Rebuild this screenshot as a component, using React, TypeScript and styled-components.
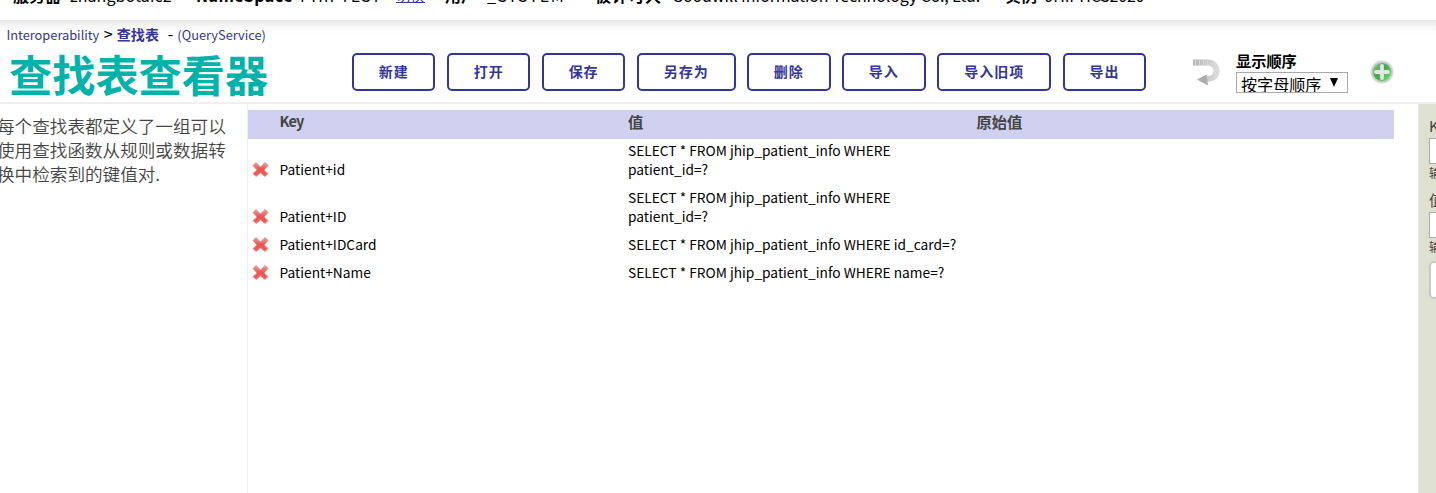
import React from "react";
import styled, { createGlobalStyle } from "styled-components";

const Global = createGlobalStyle`
  * { box-sizing: border-box; }
  body { margin: 0; background: #fff; color: #000; overflow: hidden; font-family: "Noto Sans CJK SC", sans-serif; }
`;
const Page = styled.div`width: 1436px; height: 493px; overflow: hidden; display: flex; flex-direction: column;`;
const TopBar = styled.div`height: 20px; flex: none; overflow: hidden; display: flex; align-items: flex-start; padding-left: 13px;`;
const Info = styled.div<{ $w: number }>`
  width: ${p => p.$w}px; flex: none; display: flex; white-space: nowrap; margin-top: -17px;
  font-size: 16px; line-height: 24px;
`;
const InfoLabel = styled.b<{ $w: number; $ls?: number }>`width: ${p => p.$w}px; flex: none; letter-spacing: ${p => p.$ls ?? 0}px;`;
const InfoValue = styled.span<{ $ls?: number }>`letter-spacing: ${p => p.$ls ?? 0}px;`;
const Switch = styled.a`color: #333695; text-decoration: underline; font-size: 14.5px; margin-left: 14px;`;
const Header = styled.header`
  height: 84px; flex: none; border-bottom: 2px solid #f0f0f0;
  background: linear-gradient(#e6e6e6, #f6f6f6 6px, #fff 15px);
`;
const Crumbs = styled.div`
  height: 30px; padding: 3px 0 0 6.5px; display: flex; align-items: baseline; white-space: pre;
  font-size: 12.8px; line-height: 20px; color: #333695;
`;
const Current = styled.b`font-size: 14px; letter-spacing: 0.2px;`;
const Sep = styled.span<{ $m: string }>`color: #000; font-size: 16px; margin: ${p => p.$m};`;
const Tools = styled.div`display: flex; height: 46px; align-items: flex-start;`;
const Title = styled.h1`
  margin: 0; padding-left: 9px; width: 352px; flex: none; font-size: 43.2px; line-height: 46px; font-weight: 700; color: #00b2a9;
`;
const Buttons = styled.div`display: flex; gap: 11.67px; margin-top: 3px; width: 840px; flex: none;`;
const Button = styled.button<{ $w: number }>`
  width: ${p => p.$w}px; height: 38px; flex: none; padding: 0 0 2px; border: 2px solid #333695; border-radius: 5px; background: #fff;
  color: #333695; font: 700 14px "Noto Sans CJK SC", sans-serif; letter-spacing: 1px; white-space: nowrap;
`;
const Undo = styled.svg`width: 28px; height: 30px; flex: none; margin-top: 7px;`;
const Order = styled.div`width: 112px; margin: 0 0 0 16px; flex: none;`;
const OrderLabel = styled.div`font-size: 15.2px; line-height: 20px; height: 22px; font-weight: 700;`;
const Select = styled.div`
  height: 21px; border: 1px solid #a9a9a9; padding-left: 4px; overflow: hidden; display: flex; font-size: 16.1px; line-height: 23px;
`;
const Caret = styled.svg`width: 8px; height: 9px; margin: 5px 0 0 8.5px;`;
const Add = styled.svg`width: 24px; height: 24px; margin: 10px 0 0 22px;`;
const Main = styled.main`flex: 1; display: flex; min-height: 0;`;
const Help = styled.aside`
  width: 248px; flex: none; border-right: 1px solid #f0f0f0; padding-top: 10px; overflow: hidden;
`;
const HelpText = styled.p`
  margin: 0 0 0 -3px; width: 240px; white-space: pre-line; font-size: 17.6px; line-height: 24px; font-weight: 350; color: #444;
`;
const Content = styled.section`width: 1170px; flex: none; padding: 6px 24px 0 0;`;
const Row = styled.div<{ $h: number }>`
  display: grid; grid-template-columns: 31.5px 348.5px 348.5px 1fr; height: ${p => p.$h}px; align-items: end;
  font-size: 13.75px; line-height: 19px; padding-bottom: 5px;
`;
const HeadRow = styled(Row)`
  background: #d0d0f0; color: #444; font-size: 15.3px; font-weight: 700; line-height: 22px; padding-bottom: 7px;
`;
const Cell = styled.div<{ $ls?: number }>`white-space: pre-line; letter-spacing: ${p => p.$ls ?? 0}px;`;
const KeyHead = styled(Cell)`font-size: 14.6px;`;
const Remove = styled.svg`width: 18px; height: 18px; margin: 0 0 0 4px; display: block;`;
const Side = styled.aside`
  flex: 1; min-width: 0; background: #dee0d0; border-left: 1px solid #e8e8e8; padding: 12px 0 0 10px; overflow: hidden; white-space: nowrap;
`;
const SideLabel = styled.div`font-size: 15px; line-height: 20px; height: 22px; color: #444;`;
const Field = styled.div`width: 180px; height: 26px; border: 1px solid #a9a9a9; background: #fff;`;
const Hint = styled.div<{ $h: number }>`font-size: 12px; line-height: 18px; height: ${p => p.$h}px; color: #444;`;
const SideButton = styled.div`width: 100px; height: 38px; border: 2px solid #c8c8c8; border-radius: 5px; background: #fff;`;

const buttons: [string, number][] = [["新建", 83.33], ["打开", 83.33], ["保存", 83.33], ["另存为", 98.6], ["删除", 83.33], ["导入", 83.33], ["导入旧项", 114], ["导出", 83.33]];
const rows = [
  { key: "Patient+id", value: "SELECT * FROM jhip_patient_info WHERE\npatient_id=?", h: 45 },
  { key: "Patient+ID", value: "SELECT * FROM jhip_patient_info WHERE\npatient_id=?", h: 47 },
  { key: "Patient+IDCard", value: "SELECT * FROM jhip_patient_info WHERE id_card=?", h: 28 },
  { key: "Patient+Name", value: "SELECT * FROM jhip_patient_info WHERE name=?", h: 28 },
];

export default function App() {
  return (
    <Page>
      <Global />
      <TopBar>
        <Info $w={183}><InfoLabel $w={57}>服务器</InfoLabel><InfoValue $ls={0.1}>zhangbotaic2</InfoValue></Info>
        <Info $w={249}><InfoLabel $w={104} $ls={0.5}>NameSpace</InfoLabel><InfoValue $ls={1}>PHIPTEST</InfoValue><Switch>切换</Switch></Info>
        <Info $w={150}><InfoLabel $w={42}>用户</InfoLabel><InfoValue $ls={1.5}>_SYSTEM</InfoValue></Info>
        <Info $w={410}><InfoLabel $w={77} $ls={0.7}>被许可人</InfoLabel><InfoValue $ls={-0.13}>Goodwill Information Technology Co., Ltd.</InfoValue></Info>
        <Info $w={200}><InfoLabel $w={40}>实例</InfoLabel><InfoValue $ls={-0.2}>JHIPHCS2020</InfoValue></Info>
      </TopBar>
      <Header>
        <Crumbs><span>Interoperability</span><Sep $m="0 4px 0 4.5px">&gt;</Sep><Current>查找表</Current><Sep $m="0 4px 0 8.5px">-</Sep><span>(QueryService)</span></Crumbs>
        <Tools>
          <Title>查找表查看器</Title>
          <Buttons>{buttons.map(([t, w]) => <Button key={t} $w={w}>{t}</Button>)}</Buttons>
          <Undo viewBox="0 0 28 30">
            <defs><linearGradient id="ug" x1="0" y1="0" x2="1" y2="0"><stop stopColor="#b4b4b4" /><stop offset="1" stopColor="#dadada" /></linearGradient></defs>
            <path d="M1 5.500H15C22 5.500 24.500 9.500 24.500 14 24.500 19 20.500 22 15 22" fill="none" stroke="url(#ug)" strokeWidth="6" />
            <path d="M3.500 2.500V8.500M7.500 2.500V8.500M11.500 2.500V8.500M15.500 2.500V8.500" stroke="#d8d8d8" strokeWidth="1" />
            <path d="M5 22.500L14.500 17.500 16 28.500Z" fill="#acacac" />
          </Undo>
          <Order><OrderLabel>显示顺序</OrderLabel><Select>按字母顺序<Caret viewBox="0 0 8 9"><path d="M0 0H8L4 9Z" /></Caret></Select></Order>
          <Add viewBox="0 0 24 24">
            <defs><linearGradient id="ag" x1="0" y1="0" x2="1" y2="1"><stop stopColor="#9acb9a" /><stop offset=".45" stopColor="#43a34c" /><stop offset="1" stopColor="#65ef60" /></linearGradient></defs>
            <circle cx="12" cy="12" r="11.700" fill="#e2e2e2" /><circle cx="12" cy="12" r="10.500" fill="#c4c8c4" /><circle cx="12" cy="12" r="9" fill="url(#ag)" />
            <path d="M12 6V18M6 12H18" stroke="#e4e8e4" strokeWidth="3.800" strokeLinecap="round" />
          </Add>
        </Tools>
      </Header>
      <Main>
        <Help><HelpText>{"每个查找表都定义了一组可以\n使用查找函数从规则或数据转\n换中检索到的键值对."}</HelpText></Help>
        <Content>
          <HeadRow $h={29}><span /><KeyHead $ls={-0.9}>Key</KeyHead><Cell>值</Cell><Cell>原始值</Cell></HeadRow>
          {rows.map(r => (
            <Row key={r.key} $h={r.h}>
              <Remove viewBox="0 0 18 18">
                <defs><linearGradient id="rg" x1="0" y1="0" x2="0" y2="1"><stop stopColor="#e8a098" /><stop offset=".5" stopColor="#ef5350" /><stop offset="1" stopColor="#f0605c" /></linearGradient></defs>
                <path d="M1 4.500L4 1.500 8.500 6 13 1.500 16 4.500 12 9 16 12.500 13 15.500 8.500 12 4 15.500 1 12.500 5 9Z" fill="url(#rg)" stroke="#dc9490" strokeLinejoin="round" />
              </Remove>
              <Cell>{r.key}</Cell><Cell>{r.value}</Cell><Cell />
            </Row>
          ))}
        </Content>
        <Side>
          <SideLabel>Key</SideLabel><Field /><Hint $h={26}>输入键</Hint>
          <SideLabel>值</SideLabel><Field /><Hint $h={23}>输入值</Hint>
          <SideButton />
        </Side>
      </Main>
    </Page>
  );
}
